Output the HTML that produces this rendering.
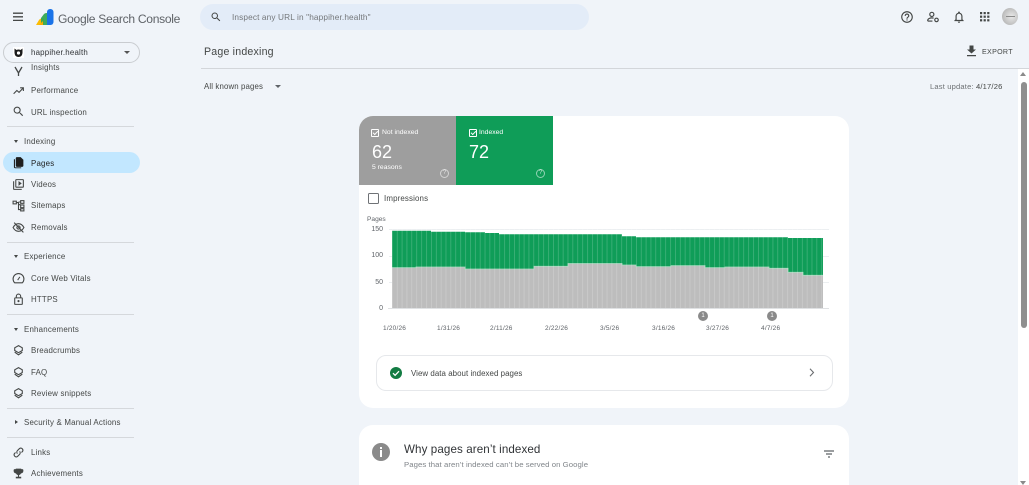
<!DOCTYPE html>
<html><head><meta charset="utf-8"><style>
*{box-sizing:border-box}
html,body{margin:0;padding:0;height:485px;overflow:hidden}
body{width:1029px;background:#f0f4f9;font-family:"Liberation Sans",sans-serif;position:relative;color:#444746}
#w{position:absolute;left:0;top:0;width:1029px;height:485px;overflow:hidden;background:#f0f4f9;filter:blur(.35px)}
.a{position:absolute;white-space:nowrap}
.n{position:absolute;left:31px;margin-top:1px;font-size:7.9px;letter-spacing:.2px;color:#444746;line-height:12px;white-space:nowrap}
.h{position:absolute;left:24px;margin-top:1px;font-size:7.9px;letter-spacing:.2px;color:#444746;line-height:12px;white-space:nowrap}
.i{position:absolute;left:12px;width:13px;height:13px;fill:#444746}
.l{position:absolute;left:7px;width:127px;height:1px;background:#d5d8dc}
.t{position:absolute;left:14px;width:0;height:0;border-left:2.5px solid transparent;border-right:2.5px solid transparent;border-top:3px solid #444746}
.ax{position:absolute;font-size:6.5px;color:#5f6368;letter-spacing:.2px;white-space:nowrap}
.ay{position:absolute;font-size:7px;color:#5f6368;text-align:right;width:20px;left:363px;line-height:8px}
.g{position:absolute;left:389px;width:440px;height:1px;background:#eceff1}
.tp{position:absolute;width:9px;height:9px;border:1px solid rgba(255,255,255,.55);border-radius:50%;font-size:6px;line-height:7px;text-align:center;color:rgba(255,255,255,.7)}
.ck{position:absolute;width:8px;height:8px;border:1px solid #fff;border-radius:1px}
.ck:after{content:"";position:absolute;left:1.2px;top:.5px;width:3.5px;height:2px;border-left:1px solid #fff;border-bottom:1px solid #fff;transform:rotate(-45deg)}
</style></head><body><div id="w">

<!-- top bar -->
<svg class="a" style="left:12px;top:12px" width="12" height="10" viewBox="0 0 12 10"><path d="M1 1.2h10M1 4.8h10M1 8.4h10" stroke="#444746" stroke-width="1.3" fill="none"/></svg>
<svg class="a" style="left:35px;top:8px" width="19" height="18" viewBox="0 0 19 18">
<path d="M1 17 L4 12 Q5 10.5 7 10.5 L9 10.5 L9 17 Z" fill="#fbbc04"/>
<path d="M6 10 L9 6 Q10 5 11.5 5 L12.5 5 L12.5 17 L6 17 Z" fill="#34a853" opacity=".95"/>
<path d="M4 17 L8 13 L8 17 Z" fill="#f9ab00"/>
<rect x="12" y="1" width="6.5" height="16" rx="3" fill="#1a73e8"/>
<path d="M12 8 L12 17 L15 17 L15 8 Z" fill="#1a73e8"/>
</svg>
<div class="a" style="left:58px;top:11px;font-size:12.1px;letter-spacing:-.3px;line-height:16px;color:#5f6368">Google Search Console</div>

<div class="a" style="left:200px;top:4px;width:389px;height:26px;border-radius:13px;background:#e3ecf8"></div>
<svg class="a" style="left:210px;top:11px" width="12" height="12" viewBox="0 0 24 24"><path d="M15.5 14h-.79l-.28-.27A6.47 6.47 0 0 0 16 9.5 6.5 6.5 0 1 0 9.5 16c1.61 0 3.09-.59 4.23-1.57l.27.28v.79l5 4.99L20.49 19l-4.99-5zm-6 0C7.01 14 5 11.99 5 9.5S7.01 5 9.5 5 14 7.01 14 9.5 11.99 14 9.5 14z" fill="#444746"/></svg>
<div class="a" style="left:232px;top:12px;font-size:8.25px;letter-spacing:.13px;line-height:12px;color:#74777a">Inspect any URL in "happiher.health"</div>

<svg class="a" style="left:900px;top:10px" width="14" height="14" viewBox="0 0 24 24"><path fill="#444746" d="M11 18h2v-2h-2v2zm1-16C6.48 2 2 6.48 2 12s4.48 10 10 10 10-4.48 10-10S17.52 2 12 2zm0 18c-4.41 0-8-3.59-8-8s3.59-8 8-8 8 3.59 8 8-3.59 8-8 8zm0-14c-2.21 0-4 1.79-4 4h2c0-1.1.9-2 2-2s2 .9 2 2c0 2-3 1.75-3 5h2c0-2.25 3-2.5 3-5 0-2.21-1.79-4-4-4z"/></svg>
<svg class="a" style="left:926px;top:10px" width="14" height="14" viewBox="0 0 24 24"><g fill="none" stroke="#444746" stroke-width="2"><circle cx="10" cy="7.5" r="3.5"/><path d="M3 19v-1.5c0-2.5 4-4 7-4 1 0 2 .1 3 .5"/><path d="M3 19h8"/><circle cx="18" cy="17" r="3"/></g></svg>
<svg class="a" style="left:952px;top:10px" width="14" height="14" viewBox="0 0 24 24"><path fill="#444746" d="M12 22c1.1 0 2-.9 2-2h-4c0 1.1.9 2 2 2zm6-6v-5c0-3.07-1.63-5.64-4.5-6.32V4c0-.83-.67-1.5-1.5-1.5s-1.5.67-1.5 1.5v.68C7.64 5.36 6 7.92 6 11v5l-2 2v1h16v-1l-2-2zm-2 1H8v-6c0-2.48 1.51-4.5 4-4.5s4 2.02 4 4.5v6z"/></svg>
<svg class="a" style="left:980px;top:12px" width="10" height="10" viewBox="0 0 10 10"><g fill="#444746"><rect x="0" y="0" width="2.2" height="2.2"/><rect x="3.6" y="0" width="2.2" height="2.2"/><rect x="7.2" y="0" width="2.2" height="2.2"/><rect x="0" y="3.6" width="2.2" height="2.2"/><rect x="3.6" y="3.6" width="2.2" height="2.2"/><rect x="7.2" y="3.6" width="2.2" height="2.2"/><rect x="0" y="7.2" width="2.2" height="2.2"/><rect x="3.6" y="7.2" width="2.2" height="2.2"/><rect x="7.2" y="7.2" width="2.2" height="2.2"/></g></svg>
<div class="a" style="left:1002px;top:8px;width:16px;height:17px;border-radius:50%;background:radial-gradient(circle at 60% 50%,#e8e8e8,#a9a9a9)"></div>
<div class="a" style="left:1006px;top:16px;width:9px;height:1px;background:#8a8a8a"></div>

<!-- property selector -->
<div class="a" style="left:3px;top:42px;width:137px;height:21px;border:1px solid #c9ccd0;border-radius:11px"></div>
<svg class="a" style="left:13px;top:47px" width="11" height="11" viewBox="0 0 11 11"><rect width="11" height="11" fill="#fff"/><path d="M1.5 1.5 L3.5 3 Q5.5 2 7.5 3 L9.5 1.5 L9.5 6 Q9 10 5.5 10 Q2 10 1.5 6Z" fill="#1c1c1c"/><circle cx="5.5" cy="6" r="1.6" fill="#fff"/></svg>
<div class="a" style="left:31px;top:47px;font-size:7.9px;letter-spacing:.2px;line-height:12px;color:#303336">happiher.health</div>
<div class="a" style="left:124px;top:51px;width:0;height:0;border-left:3px solid transparent;border-right:3px solid transparent;border-top:3px solid #555"></div>

<!-- nav -->
<div class="n" style="top:63px;height:9px;overflow:hidden;line-height:12px;margin-top:0"><span style="position:relative;top:-1px">Insights</span></div>
<svg class="i" style="top:65px" viewBox="0 0 13 13"><path d="M3 2 L6.5 8 L10 2 M6.5 8 V11" stroke="#444746" stroke-width="1.3" fill="none"/></svg>
<div class="n" style="top:84px">Performance</div>
<svg class="i" style="top:84px" viewBox="0 0 24 24"><path d="M3 18 l6-6 4 3.5 L20 8 M15 7h6v6" stroke="#444746" stroke-width="2" fill="none"/></svg>
<div class="n" style="top:106px">URL inspection</div>
<svg class="i" style="top:105px" viewBox="0 0 24 24"><path d="M15.5 14h-.79l-.28-.27A6.47 6.47 0 0 0 16 9.5 6.5 6.5 0 1 0 9.5 16c1.61 0 3.09-.59 4.23-1.57l.27.28v.79l5 4.99L20.49 19l-4.99-5zm-6 0C7.01 14 5 11.99 5 9.5S7.01 5 9.5 5 14 7.01 14 9.5 11.99 14 9.5 14z"/></svg>
<div class="l" style="top:126px"></div>
<div class="t" style="top:140px"></div><div class="h" style="top:135px">Indexing</div>
<div class="a" style="left:3px;top:152px;width:137px;height:21px;border-radius:11px;background:#c2e7ff"></div>
<svg class="i" style="top:156px" viewBox="0 0 24 24"><path d="M9 2h7l5 5v11a2 2 0 0 1-2 2H9a2 2 0 0 1-2-2V4a2 2 0 0 1 2-2z" fill="#1f1f1f"/><path d="M4 6h1.5v14a1 1 0 0 0 1 1H17v1.5H6A2.5 2.5 0 0 1 3.500 20V6z" fill="#1f1f1f"/></svg>
<div class="n" style="top:157px;color:#1f1f1f">Pages</div>
<svg class="i" style="top:178px" viewBox="0 0 24 24"><path d="M4 6H2v14a2 2 0 0 0 2 2h14v-2H4V6zm16-4H8a2 2 0 0 0-2 2v12a2 2 0 0 0 2 2h12a2 2 0 0 0 2-2V4a2 2 0 0 0-2-2zm0 14H8V4h12v12zM12 5.500v9l6-4.500z"/></svg>
<div class="n" style="top:178px">Videos</div>
<svg class="i" style="top:199px" viewBox="0 0 24 24"><g fill="none" stroke="#444746" stroke-width="2"><rect x="2" y="4" width="6" height="5"/><rect x="16" y="3" width="6" height="5"/><rect x="16" y="11" width="6" height="5"/><rect x="16" y="18" width="6" height="4"/><path d="M8 6.500h4v4h4M12 10.500v9h4M12 5.500h4"/></g></svg>
<div class="n" style="top:199px">Sitemaps</div>
<svg class="i" style="top:221px" viewBox="0 0 24 24"><g fill="none" stroke="#444746" stroke-width="2"><path d="M2 12c2.500-4.500 6-7 10-7s7.500 2.500 10 7c-2.500 4.500-6 7-10 7s-7.500-2.500-10-7z"/><circle cx="12" cy="12" r="3"/><path d="M4 3l17 18"/></g></svg>
<div class="n" style="top:221px">Removals</div>
<div class="l" style="top:242px"></div>
<div class="t" style="top:255px"></div><div class="h" style="top:250px">Experience</div>
<svg class="i" style="top:272px" viewBox="0 0 24 24"><g fill="none" stroke="#444746" stroke-width="2"><path d="M5 20a10 10 0 1 1 14 0z"/><path d="M10.500 15l4-6"/></g></svg>
<div class="n" style="top:272px">Core Web Vitals</div>
<svg class="i" style="top:293px" viewBox="0 0 24 24"><path d="M18 8h-1V6A5 5 0 0 0 7 6v2H6a2 2 0 0 0-2 2v10a2 2 0 0 0 2 2h12a2 2 0 0 0 2-2V10a2 2 0 0 0-2-2zM9 6a3 3 0 0 1 6 0v2H9V6zm9 14H6V10h12v10zm-6-3a2 2 0 1 0 0-4 2 2 0 0 0 0 4z"/></svg>
<div class="n" style="top:293px">HTTPS</div>
<div class="l" style="top:314px"></div>
<div class="t" style="top:328px"></div><div class="h" style="top:323px">Enhancements</div>
<svg class="i" style="top:344px" viewBox="0 0 24 24"><g fill="none" stroke="#444746" stroke-width="2"><path d="M12 3l7 4v5l-7 4-7-4V7z"/><path d="M5 15l7 5 7-5"/></g></svg>
<div class="n" style="top:344px">Breadcrumbs</div>
<svg class="i" style="top:366px" viewBox="0 0 24 24"><g fill="none" stroke="#444746" stroke-width="2"><path d="M12 3l7 4v5l-7 4-7-4V7z"/><path d="M5 15l7 5 7-5"/></g></svg>
<div class="n" style="top:366px">FAQ</div>
<svg class="i" style="top:387px" viewBox="0 0 24 24"><g fill="none" stroke="#444746" stroke-width="2"><path d="M12 3l7 4v5l-7 4-7-4V7z"/><path d="M5 15l7 5 7-5"/></g></svg>
<div class="n" style="top:387px">Review snippets</div>
<div class="l" style="top:408px"></div>
<div class="a" style="left:15px;top:420px;width:0;height:0;border-top:2.500px solid transparent;border-bottom:2.500px solid transparent;border-left:3px solid #444746"></div>
<div class="h" style="top:416px">Security &amp; Manual Actions</div>
<div class="l" style="top:437px"></div>
<svg class="i" style="top:446px" viewBox="0 0 24 24"><g fill="none" stroke="#444746" stroke-width="2"><path d="M10 14a4 4 0 0 1 0-5.500l4-4a4 4 0 0 1 5.500 5.500l-2 2"/><path d="M14 10a4 4 0 0 1 0 5.500l-4 4a4 4 0 0 1-5.500-5.500l2-2"/></g></svg>
<div class="n" style="top:446px">Links</div>
<svg class="i" style="top:467px" viewBox="0 0 24 24"><path d="M19 4h-2V3H7v1H5a2 2 0 0 0-2 2v1a5 5 0 0 0 4.400 4.900A5 5 0 0 0 11 14.900V18H7v3h10v-3h-4v-3.100a5 5 0 0 0 3.600-3A5 5 0 0 0 21 7V6a2 2 0 0 0-2-2z"/></svg>
<div class="n" style="top:467px">Achievements</div>

<!-- header -->
<div class="a" style="left:204px;top:45px;font-size:10.6px;letter-spacing:.2px;line-height:15px;color:#444746">Page indexing</div>
<svg class="a" style="left:966px;top:45px" width="11" height="12" viewBox="0 0 11 12"><path d="M3.500 0.500h4v4h2.500L5.500 8.500 1 4.500h2.500zM1 10h9v1.300H1z" fill="#444746"/></svg>
<div class="a" style="left:982px;top:47px;font-size:7.1px;letter-spacing:.3px;line-height:11px;color:#444746">EXPORT</div>
<div class="a" style="left:201px;top:68px;width:828px;height:1px;background:#d3d6da"></div>
<div class="a" style="left:204px;top:81px;font-size:7.85px;letter-spacing:.13px;line-height:12px;color:#444746">All known pages</div>
<div class="a" style="left:275px;top:85px;width:0;height:0;border-left:3px solid transparent;border-right:3px solid transparent;border-top:3px solid #5f6368"></div>
<div class="a" style="left:930px;top:81px;font-size:7.6px;letter-spacing:.16px;line-height:12px;color:#6e7275">Last update: <span style="color:#444746">4/17/26</span></div>

<!-- scrollbar -->
<div class="a" style="left:1018px;top:69px;width:11px;height:416px;background:#fff"></div>
<div class="a" style="left:1020px;top:72px;width:0;height:0;border-left:3.500px solid transparent;border-right:3.500px solid transparent;border-bottom:4px solid #8a8a8a"></div>
<div class="a" style="left:1021px;top:82px;width:6px;height:246px;border-radius:3px;background:#8f8f8f"></div>
<div class="a" style="left:1020px;top:481px;width:0;height:0;border-left:3.500px solid transparent;border-right:3.500px solid transparent;border-top:4px solid #8a8a8a"></div>

<!-- card 1 -->
<div class="a" style="left:359px;top:116px;width:490px;height:292px;background:#fff;border-radius:14px"></div>
<div class="a" style="left:359px;top:116px;width:97px;height:69px;background:#9e9e9e;border-top-left-radius:14px"></div>
<div class="a" style="left:456px;top:116px;width:96.500px;height:69px;background:#0f9d58"></div>
<div class="ck" style="left:371px;top:129px"></div>
<div class="a" style="left:382px;top:128px;font-size:6.800px;line-height:10px;color:#fff">Not indexed</div>
<div class="a" style="left:372px;top:141px;font-size:18px;line-height:22px;color:#fff">62</div>
<div class="a" style="left:372px;top:163px;font-size:6.800px;line-height:9px;color:#fff">5 reasons</div>
<div class="tp" style="left:440px;top:169px">?</div>
<div class="ck" style="left:469px;top:129px"></div>
<div class="a" style="left:479px;top:128px;font-size:6.800px;line-height:10px;color:#fff">Indexed</div>
<div class="a" style="left:469px;top:141px;font-size:18px;line-height:22px;color:#fff">72</div>
<div class="tp" style="left:536px;top:169px">?</div>

<div class="a" style="left:368px;top:193px;width:11px;height:11px;border:1.200px solid #6f7276;border-radius:1.500px"></div>
<div class="a" style="left:384px;top:193px;font-size:7.9px;letter-spacing:.15px;line-height:12px;color:#444746">Impressions</div>

<div class="a" style="left:367px;top:216px;font-size:6.600px;line-height:8px;color:#5f6368">Pages</div>
<div class="ay" style="top:226px">150</div>
<div class="ay" style="top:252px">100</div>
<div class="ay" style="top:279px">50</div>
<div class="ay" style="top:305px">0</div>
<div class="g" style="top:229px"></div>
<div class="g" style="top:256px"></div>
<div class="g" style="top:282px"></div>

<svg class="a" style="left:385px;top:225px" width="445" height="90" viewBox="385 225 445 90">
<defs><pattern id="p" x="392" y="0" width="4.880" height="100" patternUnits="userSpaceOnUse"><rect x="0" y="0" width=".6" height="100" fill="#fff" opacity=".28"/></pattern></defs>
<path id="gr" fill="#0f9d58" d="M392 230.700H431V231.700H465V232.300H485V233H499V234.200H622V236.300H636V237.300H788V238H823V276H392Z"/>
<path fill="#bdbdbd" d="M392 267.700H416V267H465V269H534V266.300H568V263.500H622V265H636V266.700H671V265.700H705V267.700H725V267H769V268.300H788V272.300H803V275.300H823V308H392Z"/>
<path fill="none" stroke="#a8dcbf" stroke-width=".8" d="M392 267.700H416V267H465V269H534V266.300H568V263.500H622V265H636V266.700H671V265.700H705V267.700H725V267H769V268.300H788V272.300H803V275.300H823"/>
<rect x="392" y="229" width="431" height="79" fill="url(#p)"/>
<rect x="388" y="308" width="441" height="1" fill="#dfe1e3"/>
</svg>
<div class="a" style="left:698px;top:311px;width:10px;height:10px;border-radius:50%;background:#8a8a8a;color:#fff;font-size:6px;line-height:10px;text-align:center">1</div>
<div class="a" style="left:767px;top:311px;width:10px;height:10px;border-radius:50%;background:#8a8a8a;color:#fff;font-size:6px;line-height:10px;text-align:center">1</div>
<div class="ax" style="left:383px;top:325px">1/20/26</div>
<div class="ax" style="left:437px;top:325px">1/31/26</div>
<div class="ax" style="left:490px;top:325px">2/11/26</div>
<div class="ax" style="left:545px;top:325px">2/22/26</div>
<div class="ax" style="left:600px;top:325px">3/5/26</div>
<div class="ax" style="left:652px;top:325px">3/16/26</div>
<div class="ax" style="left:706px;top:325px">3/27/26</div>
<div class="ax" style="left:761px;top:325px">4/7/26</div>

<div class="a" style="left:376px;top:355px;width:457px;height:36px;border:1px solid #e6e8eb;border-radius:10px"></div>
<svg class="a" style="left:390px;top:367px" width="12" height="12" viewBox="0 0 12 12"><circle cx="6" cy="6" r="6" fill="#137c43"/><path d="M3 6.200l2.100 2.100L9 4.200" stroke="#fff" stroke-width="1.300" fill="none"/></svg>
<div class="a" style="left:411px;top:368px;font-size:7.9px;letter-spacing:.05px;line-height:12px;color:#444746">View data about indexed pages</div>
<svg class="a" style="left:809px;top:368px" width="6" height="9" viewBox="0 0 6 9"><path d="M1 .8l3.500 3.700L1 8.200" stroke="#6a6d70" stroke-width="1.100" fill="none"/></svg>

<!-- card 2 -->
<div class="a" style="left:359px;top:425px;width:490px;height:60px;background:#fff;border-radius:14px 14px 0 0"></div>
<div class="a" style="left:372px;top:443px;width:18px;height:18px;border-radius:50%;background:#8a8a8a"></div>
<div class="a" style="left:380px;top:446.500px;width:2.200px;height:2.200px;background:#fff"></div>
<div class="a" style="left:380px;top:450px;width:2.200px;height:7px;background:#fff"></div>
<div class="a" style="left:404px;top:442px;font-size:11.6px;letter-spacing:.1px;line-height:15px;color:#303336">Why pages aren’t indexed</div>
<div class="a" style="left:404px;top:459px;font-size:7.75px;letter-spacing:.07px;line-height:11px;color:#80858a">Pages that aren’t indexed can’t be served on Google</div>
<svg class="a" style="left:824px;top:450px" width="10" height="8" viewBox="0 0 10 8"><path d="M0 1h10M2 4h6M4 7h2" stroke="#5f6368" stroke-width="1.200" fill="none"/></svg>
</div></body></html>
